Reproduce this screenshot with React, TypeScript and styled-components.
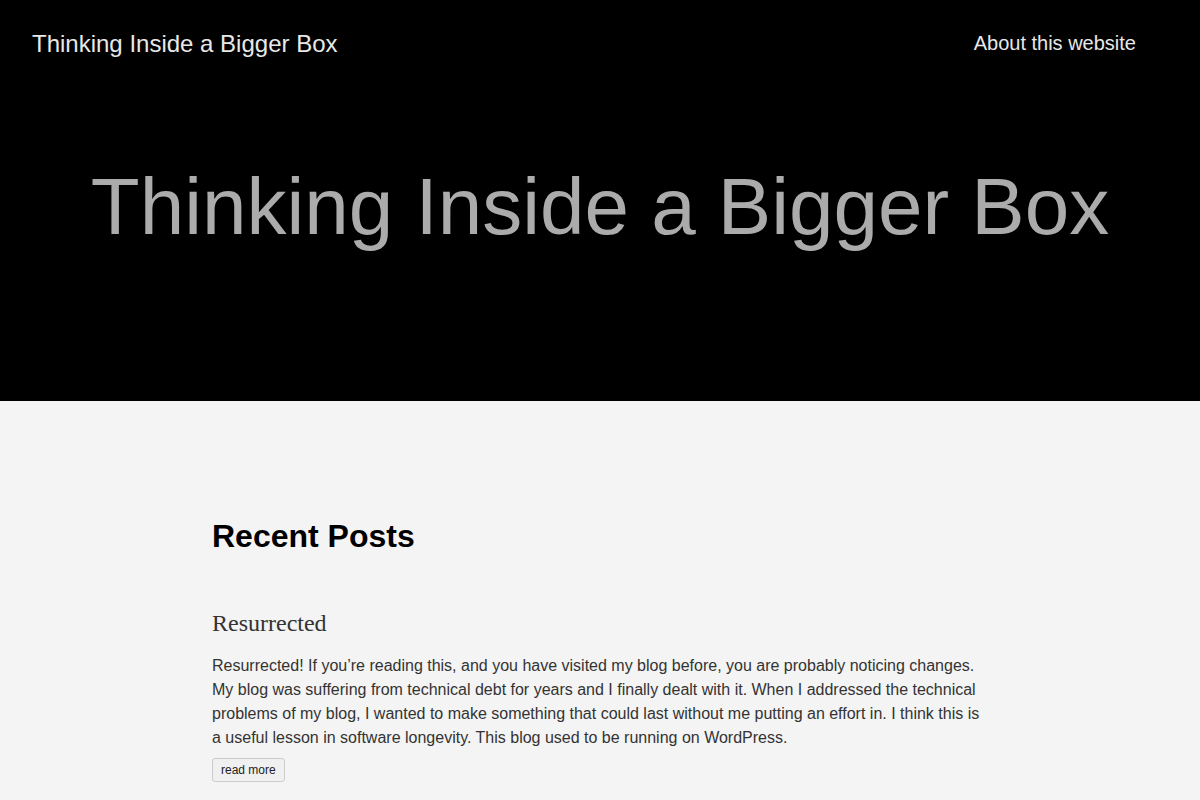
import styled, { createGlobalStyle } from "styled-components";

const GlobalStyle = createGlobalStyle`
  html, body {
    margin: 0;
    padding: 0;
    background: #f4f4f4;
    font-family: "Liberation Sans", Arial, sans-serif;
  }
`;

const Header = styled.header`
  background: #000;
  height: 401px;
  display: flex;
  flex-direction: column;
`;

const TopBar = styled.nav`
  display: flex;
  justify-content: space-between;
  align-items: center;
  padding: 28px 64px 0 32px;
  height: 32px;
`;

const SiteTitle = styled.a`
  color: #e8e8e8;
  font-size: 24px;
  text-decoration: none;
`;

const NavLink = styled.a`
  color: #e8e8e8;
  font-size: 20px;
  text-decoration: none;
  margin-top: -2px;
`;

const Hero = styled.h1`
  margin: 0;
  padding-top: 101px;
  text-align: center;
  color: #ababab;
  font-size: 80px;
  font-weight: normal;
  line-height: 92px;
`;

const Main = styled.main`
  width: 776px;
  margin: 0 auto;
  padding-top: 114px;
`;

const SectionTitle = styled.h2`
  margin: 0 0 51px;
  font-size: 32px;
  line-height: 42px;
  color: #000;
`;

const PostTitle = styled.h3`
  margin: 0 0 16px;
  font-family: "Liberation Serif", "Times New Roman", serif;
  font-weight: normal;
  font-size: 24px;
  line-height: 30px;
  color: #333;
`;

const Excerpt = styled.p`
  margin: 0 0 8px;
  font-size: 16px;
  line-height: 24px;
  color: #333;
`;

const ReadMore = styled.button`
  font-family: "Liberation Sans", Arial, sans-serif;
  font-size: 12px;
  color: #222;
  background: #f0f0f0;
  border: 1px solid #ccc;
  border-radius: 3px;
  padding: 4px 8px;
  cursor: pointer;
`;

export default function App() {
  return (
    <>
      <GlobalStyle />
      <Header>
        <TopBar>
          <SiteTitle href="#">Thinking Inside a Bigger Box</SiteTitle>
          <NavLink href="#">About this website</NavLink>
        </TopBar>
        <Hero>Thinking Inside a Bigger Box</Hero>
      </Header>
      <Main>
        <SectionTitle>Recent Posts</SectionTitle>
        <article>
          <PostTitle>Resurrected</PostTitle>
          <Excerpt>
            Resurrected! If you’re reading this, and you have visited my blog
            before, you are probably noticing changes. My blog was suffering
            from technical debt for years and I finally dealt with it. When I
            addressed the technical problems of my blog, I wanted to make
            something that could last without me putting an effort in. I think
            this is a useful lesson in software longevity. This blog used to be
            running on WordPress.
          </Excerpt>
          <ReadMore>read more</ReadMore>
        </article>
      </Main>
    </>
  );
}
